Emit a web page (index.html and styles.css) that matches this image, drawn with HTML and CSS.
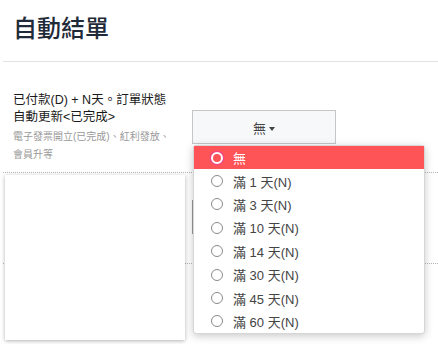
FILE: index.html
```html
<!DOCTYPE html>
<html lang="zh-Hant">
<head>
  <meta charset="UTF-8" />
  <meta name="viewport" content="width=device-width, initial-scale=1.0" />
  <title>自動結單</title>
  <link rel="stylesheet" href="styles.css">
</head>
<body>
  <div class="page">
    <header class="page-head">
      <h1>自動結單</h1>
    </header>

    <div class="setting-row first">
      <div class="setting-label">
        <div class="label-main">已付款(D) + N天。訂單狀態<br>自動更新&lt;已完成&gt;</div>
        <div class="label-note">電子發票開立(已完成)、紅利發放、<br>會員升等</div>
      </div>
      <div class="setting-control">
        <div class="dropdown">
          <button class="dropdown-toggle" type="button">無<span class="caret"></span></button>
          <ul class="dropdown-menu">
            <li class="active"><span class="radio"></span>無</li>
            <li><span class="radio"></span>滿 1 天(N)</li>
            <li><span class="radio"></span>滿 3 天(N)</li>
            <li><span class="radio"></span>滿 10 天(N)</li>
            <li><span class="radio"></span>滿 14 天(N)</li>
            <li><span class="radio"></span>滿 30 天(N)</li>
            <li><span class="radio"></span>滿 45 天(N)</li>
            <li><span class="radio"></span>滿 60 天(N)</li>
          </ul>
        </div>
      </div>
    </div>

    <div class="setting-row second">
      <div class="setting-label"></div>
      <div class="setting-control">
        <div class="field-box"></div>
      </div>
    </div>

    <div class="setting-row third"></div>

    <div class="floating-card"></div>
  </div>
</body>
</html>
```

FILE: styles.css
```css
body {
  margin: 0;
  font-family: 'Liberation Sans', 'Noto Sans CJK TC', sans-serif;
  color: #222;
  background: #fff;
}
.page {
  position: relative;
  padding-left: 3px;
}
.page-head {
  border-bottom: 1px solid #e2e2e2;
  height: 61px;
}
.page-head h1 {
  margin: 0;
  padding: 14px 0 0 10px;
  font-size: 24px;
  font-weight: 500;
  line-height: 30px;
  color: #1f2b38;
}
.setting-row {
  display: flex;
  border-bottom: 1px dotted #b5b5b5;
}
.setting-row.first {
  height: 110px;
}
.setting-row.second {
  height: 90px;
}
.setting-row.third {
  height: 80px;
  border-bottom: none;
}
.setting-label {
  width: 179px;
  padding: 30px 0 0 10px;
  flex-shrink: 0;
}
.label-main {
  font-size: 12.5px;
  line-height: 17px;
  color: #1a1a1a;
}
.label-note {
  margin-top: 2px;
  font-size: 10px;
  line-height: 18px;
  color: #999;
}
.setting-control {
  flex: 1;
}
.setting-row.first .setting-control {
  padding-top: 48px;
}
.dropdown {
  position: relative;
}
.dropdown-toggle {
  display: block;
  width: 144px;
  height: 34px;
  background: #f7f8fa;
  border: 1px solid #c6c6c6;
  font-family: 'Liberation Sans', 'Noto Sans CJK TC', sans-serif;
  font-size: 13px;
  color: #444;
  padding: 0;
}
.caret {
  display: inline-block;
  margin-left: 3px;
  vertical-align: middle;
  border-top: 4px solid #444;
  border-left: 3px solid transparent;
  border-right: 3px solid transparent;
}
.dropdown-menu {
  position: absolute;
  top: 35px;
  left: 1px;
  width: 230px;
  margin: 0;
  padding: 0;
  list-style: none;
  background: #fff;
  border: 1px solid #d6d6d6;
  border-radius: 3px;
  box-shadow: 0 2px 8px rgba(0,0,0,0.22);
  z-index: 3;
}
.dropdown-menu li {
  display: flex;
  align-items: center;
  height: 23.4px;
  padding-left: 17px;
  font-size: 13px;
  color: #444;
}
.dropdown-menu li.active {
  background: #ff5457;
  color: #fff;
}
.radio {
  width: 10px;
  height: 10px;
  border: 1px solid #8a8a8a;
  border-radius: 50%;
  margin-right: 10px;
}
.active .radio {
  width: 8px;
  height: 8px;
  border: 2px solid #fff;
  box-shadow: 0 0 0 1px #e8409a;
}
.setting-row.second .setting-control {
  padding-top: 27px;
}
.field-box {
  width: 200px;
  height: 34px;
  border-left: 2px solid #999;
  background: #f4f4f4;
}
.floating-card {
  position: absolute;
  left: 5px;
  top: 175px;
  width: 180px;
  height: 165px;
  background: #fff;
  box-shadow: 0 1px 4px rgba(0,0,0,0.3);
  z-index: 2;
}
```
